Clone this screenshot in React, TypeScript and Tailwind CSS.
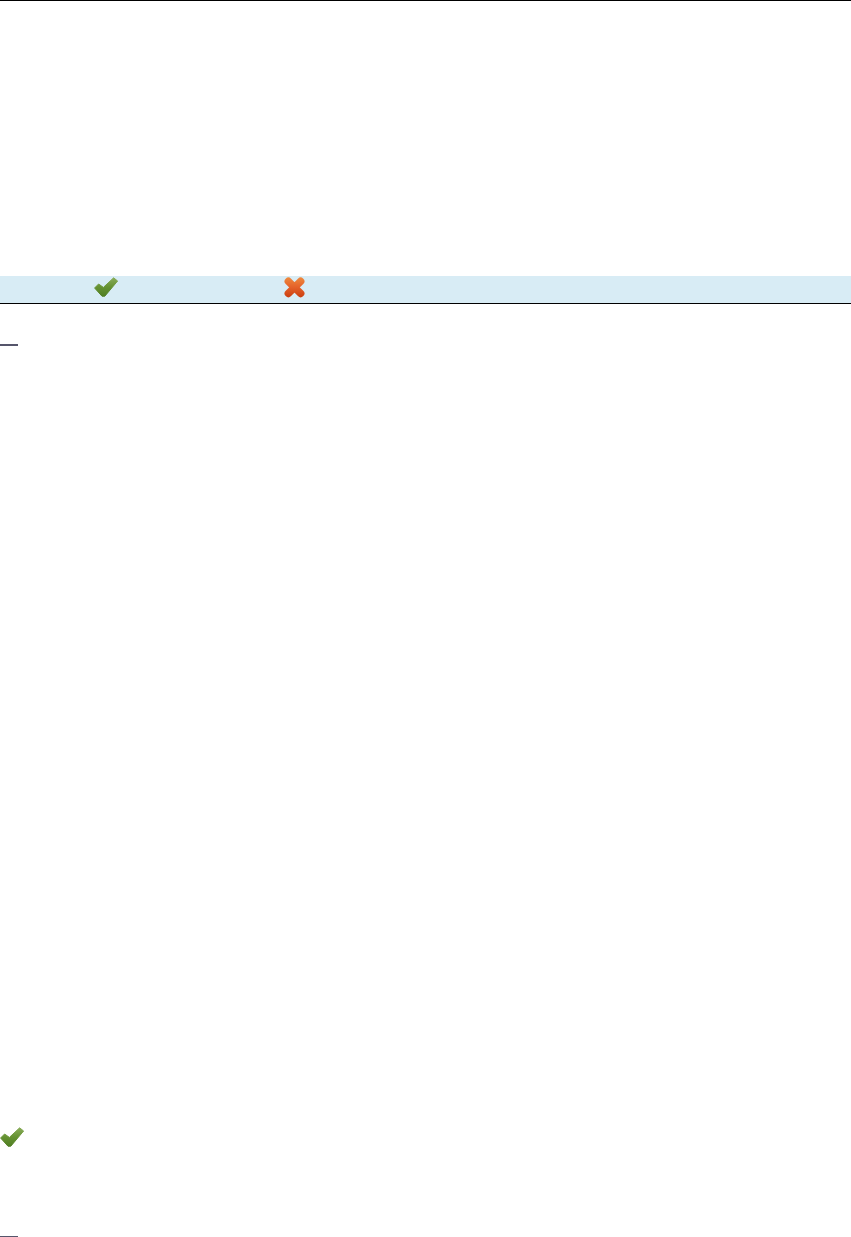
import React from 'react';

const CheckIcon = () => (
  <svg width="24" height="20" viewBox="0 0 24 20" className="block overflow-visible blur-[0.7px]">
    <defs>
      <linearGradient id="checkFill" gradientUnits="userSpaceOnUse" x1="0" y1="0" x2="0" y2="20">
        <stop offset="0" stopColor="#8cae5c" />
        <stop offset="0.5" stopColor="#659232" />
        <stop offset="1" stopColor="#4f7d22" />
      </linearGradient>
    </defs>
    <path
      d="M0.6 11 L4.6 7 L9.4 10.4 L19.6 0.8 L23.6 4 L10.8 19.2 L8 19.2 Z"
      fill="url(#checkFill)"
      stroke="url(#checkFill)"
      strokeWidth="1"
      strokeLinejoin="round"
    />
  </svg>
);

const CrossIcon = () => (
  <svg width="21" height="20" viewBox="0 0 21 20" className="block overflow-visible blur-[0.7px]">
    <defs>
      <linearGradient id="crossFill" gradientUnits="userSpaceOnUse" x1="0" y1="0" x2="0" y2="20">
        <stop offset="0" stopColor="#ee8a3e" />
        <stop offset="0.5" stopColor="#e5622a" />
        <stop offset="1" stopColor="#cc3f10" />
      </linearGradient>
    </defs>
    <path
      d="M4.4 4.4 L16.6 16.4 M16.6 4.4 L4.4 16.4"
      fill="none"
      stroke="url(#crossFill)"
      strokeWidth="7.6"
      strokeLinecap="round"
    />
  </svg>
);

const Dash = () => <div className="h-[2px] w-[18px] bg-[#55556b]" />;

export default function App() {
  return (
    <div className="flex min-h-[1237px] flex-col border-t border-black bg-white">
      <div className="mt-[275px] flex h-[27px] items-start bg-[#d8ecf5] pt-[1px]">
        <div className="ml-[94px] w-[190px]">
          <CheckIcon />
        </div>
        <CrossIcon />
      </div>
      <div className="h-px bg-black" />
      <div className="mt-[40px]">
        <Dash />
      </div>
      <div className="mt-[781px]">
        <CheckIcon />
      </div>
      <div className="mt-[89px]">
        <Dash />
      </div>
    </div>
  );
}
